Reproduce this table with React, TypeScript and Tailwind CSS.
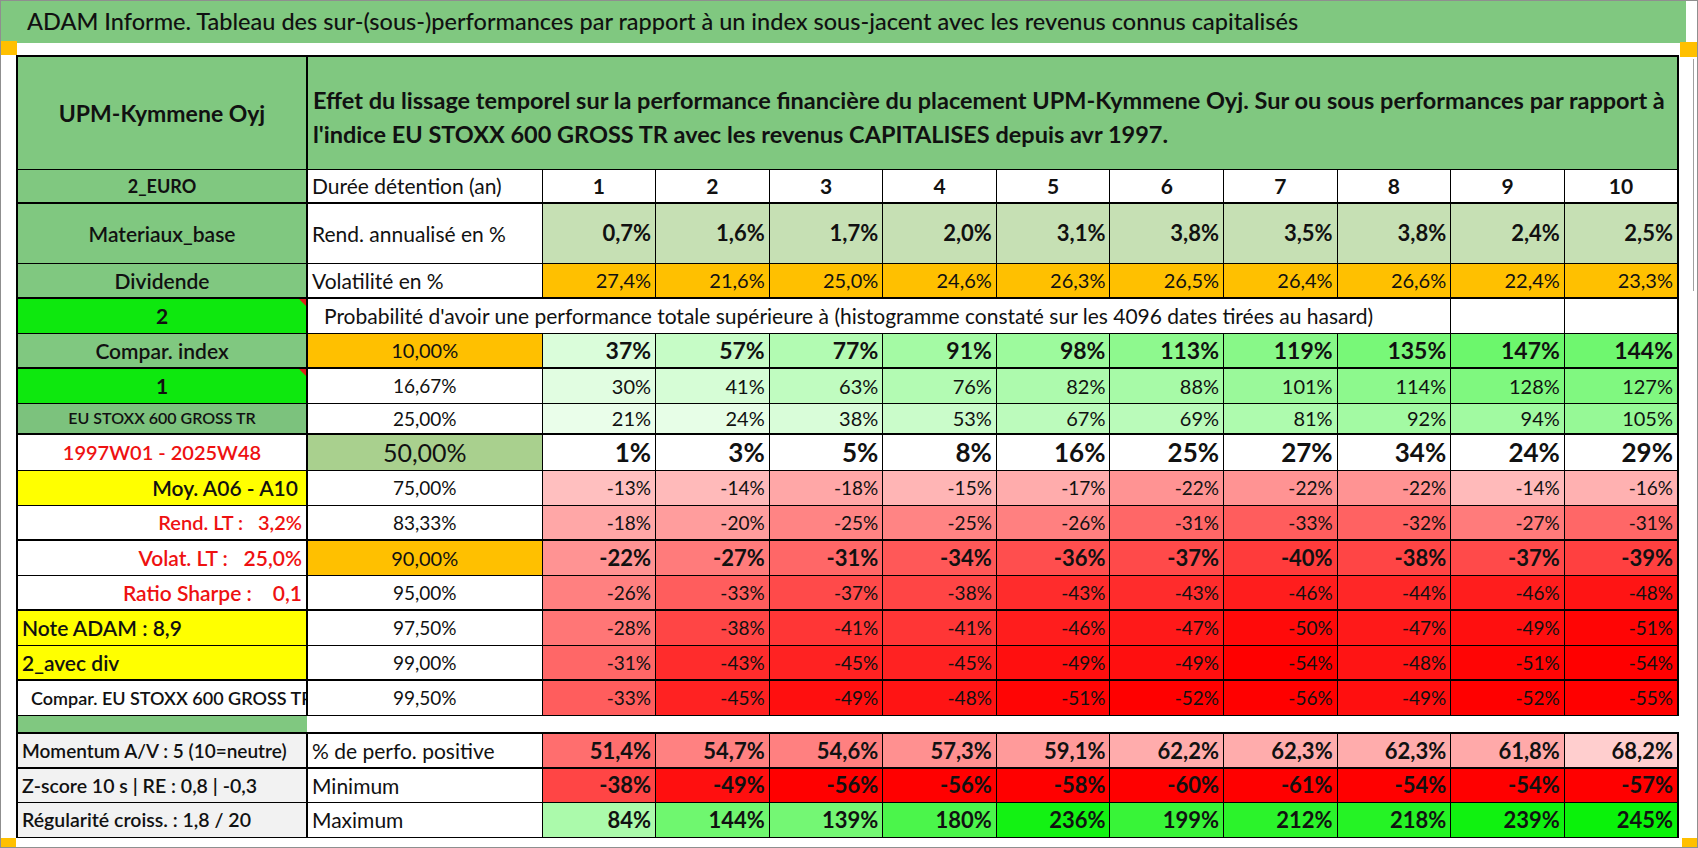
import React from "react";

const years = [1, 2, 3, 4, 5, 6, 7, 8, 9, 10];
const rend = ["0,7%", "1,6%", "1,7%", "2,0%", "3,1%", "3,8%", "3,5%", "3,8%", "2,4%", "2,5%"];
const vol = ["27,4%", "21,6%", "25,0%", "24,6%", "26,3%", "26,5%", "26,4%", "26,6%", "22,4%", "23,3%"];
const positive = [51.4, 54.7, 54.6, 57.3, 59.1, 62.2, 62.3, 62.3, 61.8, 68.2];
const minimum = [-38, -49, -56, -56, -58, -60, -61, -54, -54, -57];
const maximum = [84, 144, 139, 180, 236, 199, 212, 218, 239, 245];

type ProbRow = {
  label: React.ReactNode;
  labelCls: string;
  pct: string;
  pctCls: string;
  values: number[];
  valCls: string;
  plain?: boolean;
  bottom: string;
  h: string;
};

// teinte : blanc -> vert (positif), blanc -> rouge (negatif)
function cellColor(v: number) {
  if (v >= 0) {
    const t = Math.min(v / 255, 1);
    const c = Math.round(255 * (1 - t));
    return `rgb(${c},${Math.round(255 - 14 * t)},${c})`;
  }
  const t = Math.min(Math.abs(v) / 52, 1);
  const c = Math.round(255 * (1 - t));
  return `rgb(255,${c},${c})`;
}

function positiveColor(v: number) {
  const g = Math.min(255, Math.round(110 + (v - 51.4) * 5.7));
  return `rgb(255,${g},${g})`;
}

const fmt = (v: number) => `${v}%`;

function Corner() {
  return (
    <span className="absolute right-0 top-0 h-0 w-0 border-l-[7px] border-t-[7px] border-l-transparent border-t-[#e0201a]" />
  );
}

const probRows: ProbRow[] = [
  {
    label: "Compar. index",
    labelCls: "bg-[#80c880] text-center text-[21px] font-semibold",
    pct: "10,00%",
    pctCls: "bg-[#ffc000] text-[20px]",
    values: [37, 57, 77, 91, 98, 113, 119, 135, 147, 144],
    valCls: "text-[23px] font-bold",
    bottom: "border-b-2",
    h: "h-[35px]",
  },
  {
    label: (
      <>
        1
        <Corner />
      </>
    ),
    labelCls: "relative bg-[#0ee80e] text-center text-[21px] font-bold",
    pct: "16,67%",
    pctCls: "text-[19px]",
    values: [30, 41, 63, 76, 82, 88, 101, 114, 128, 127],
    valCls: "text-[20px]",
    bottom: "border-b",
    h: "h-[35px]",
  },
  {
    label: "EU STOXX 600 GROSS TR",
    labelCls: "bg-[#7cc27d] text-center text-[16px] font-semibold",
    pct: "25,00%",
    pctCls: "text-[19px]",
    values: [21, 24, 38, 53, 67, 69, 81, 92, 94, 105],
    valCls: "text-[20px]",
    bottom: "border-b-2",
    h: "h-[31px]",
  },
  {
    label: "1997W01 - 2025W48",
    labelCls: "text-center text-[20px] font-semibold text-[#ee1111]",
    pct: "50,00%",
    pctCls: "bg-[#a9d08e] text-[25px]",
    values: [1, 3, 5, 8, 16, 25, 27, 34, 24, 29],
    valCls: "text-[26px] font-bold",
    plain: true,
    bottom: "border-b",
    h: "h-[36px]",
  },
  {
    label: "Moy. A06 - A10",
    labelCls: "bg-[#ffff00] pr-[8px] text-right text-[21px] font-semibold",
    pct: "75,00%",
    pctCls: "text-[19px]",
    values: [-13, -14, -18, -15, -17, -22, -22, -22, -14, -16],
    valCls: "text-[19px]",
    bottom: "border-b",
    h: "h-[35px]",
  },
  {
    label: "Rend. LT :   3,2%",
    labelCls: "pr-[4px] text-right text-[20px] font-semibold text-[#ee1111]",
    pct: "83,33%",
    pctCls: "text-[19px]",
    values: [-18, -20, -25, -25, -26, -31, -33, -32, -27, -31],
    valCls: "text-[19px]",
    bottom: "border-b-2",
    h: "h-[35px]",
  },
  {
    label: "Volat. LT :   25,0%",
    labelCls: "pr-[4px] text-right text-[21px] font-semibold text-[#ee1111]",
    pct: "90,00%",
    pctCls: "bg-[#ffc000] text-[20px]",
    values: [-22, -27, -31, -34, -36, -37, -40, -38, -37, -39],
    valCls: "text-[22px] font-bold",
    bottom: "border-b",
    h: "h-[35px]",
  },
  {
    label: "Ratio Sharpe :    0,1",
    labelCls: "pr-[4px] text-right text-[21px] font-semibold text-[#ee1111]",
    pct: "95,00%",
    pctCls: "text-[19px]",
    values: [-26, -33, -37, -38, -43, -43, -46, -44, -46, -48],
    valCls: "text-[19px]",
    bottom: "border-b-2",
    h: "h-[35px]",
  },
  {
    label: "Note ADAM : 8,9",
    labelCls: "bg-[#ffff00] pl-[4px] text-left text-[21px] font-semibold",
    pct: "97,50%",
    pctCls: "text-[19px]",
    values: [-28, -38, -41, -41, -46, -47, -50, -47, -49, -51],
    valCls: "text-[19px]",
    bottom: "border-b",
    h: "h-[35px]",
  },
  {
    label: "2_avec div",
    labelCls: "bg-[#ffff00] pl-[4px] text-left text-[21px] font-semibold",
    pct: "99,00%",
    pctCls: "text-[19px]",
    values: [-31, -43, -45, -45, -49, -49, -54, -48, -51, -54],
    valCls: "text-[19px]",
    bottom: "border-b-2",
    h: "h-[35px]",
  },
  {
    label: "Compar. EU STOXX 600 GROSS TR",
    labelCls: "pl-[13px] pr-0 text-left text-[18px] font-semibold",
    pct: "99,50%",
    pctCls: "text-[19px]",
    values: [-33, -45, -49, -48, -51, -52, -56, -49, -52, -55],
    valCls: "text-[19px]",
    bottom: "border-b",
    h: "h-[35px]",
  },
];

export default function App() {
  const td = "border border-black px-[4px] leading-none whitespace-nowrap overflow-hidden";
  const num = `${td} text-right`;

  return (
    <div className="relative h-[848px] w-[1698px] overflow-hidden border border-[#8f8f8f] bg-white font-['Lato','Open_Sans',sans-serif] text-[#111]">
      {/* bandeau titre */}
      <div className="mr-[11px] flex h-[42px] items-center bg-[#80c880] pl-[26px] text-[23.5px] font-medium whitespace-nowrap">
        ADAM Informe. Tableau des sur-(sous-)performances par rapport à un index sous-jacent avec les revenus connus capitalisés
      </div>

      <div className="pl-[15px] pt-[12px]">
        <table className="w-[1663px] table-fixed border-collapse">
          <colgroup>
            <col className="w-[290px]" />
            <col className="w-[235px]" />
            {years.map((y) => (
              <col key={y} />
            ))}
          </colgroup>
          <tbody>
            <tr className="h-[113px]">
              <td className="border-2 border-b border-black bg-[#80c880] text-center text-[23px] font-bold whitespace-nowrap">UPM-Kymmene Oyj</td>
              <td colSpan={11} className="border-2 border-b border-black bg-[#80c880] pl-[5px] pt-[9px] text-[23.5px] font-bold whitespace-nowrap">
                <div className="leading-[34px]">
                  Effet du lissage temporel sur la performance financière du placement UPM-Kymmene Oyj. Sur ou sous performances par rapport à
                </div>
                <div className="leading-[34px]">l'indice EU STOXX 600 GROSS TR avec les revenus CAPITALISES depuis avr 1997.</div>
              </td>
            </tr>

            <tr className="h-[34px]">
              <td className={`${td} border-b-2 border-l-2 bg-[#80c880] text-center text-[18px] font-bold`}>2_EURO</td>
              <td className={`${td} border-b-2 border-l-2 text-[21px]`}>Durée détention (an)</td>
              {years.map((y) => (
                <td key={y} className={`${td} border-b-2 text-center text-[21px] font-bold ${y === 10 ? "border-r-2" : ""}`}>
                  {y}
                </td>
              ))}
            </tr>

            <tr className="h-[60px]">
              <td className={`${td} border-l-2 bg-[#80c880] text-center text-[21px] font-semibold`}>Materiaux_base</td>
              <td className={`${td} border-l-2 text-[21px]`}>Rend. annualisé en %</td>
              {rend.map((r, i) => (
                <td key={i} className={`${num} bg-[#c6e0b4] text-[22px] font-bold ${i === 9 ? "border-r-2" : ""}`}>
                  {r}
                </td>
              ))}
            </tr>

            <tr className="h-[35px]">
              <td className={`${td} border-b-2 border-l-2 bg-[#80c880] text-center text-[21px] font-semibold`}>Dividende</td>
              <td className={`${td} border-b-2 border-l-2 text-[21px]`}>Volatilité en %</td>
              {vol.map((r, i) => (
                <td key={i} className={`${num} border-b-2 bg-[#ffc000] text-[20px] ${i === 9 ? "border-r-2" : ""}`}>
                  {r}
                </td>
              ))}
            </tr>

            <tr className="h-[35px]">
              <td className={`${td} relative border-l-2 bg-[#0ee80e] text-center text-[21px] font-bold`}>
                2
                <Corner />
              </td>
              <td colSpan={9} className={`${td} border-l-2 pl-[16px] text-[21px]`}>
                Probabilité d'avoir une performance totale supérieure à (histogramme constaté sur les 4096 dates tirées au hasard)
              </td>
              <td className={td} />
              <td className={`${td} border-r-2`} />
            </tr>

            {probRows.map((row, r) => (
              <tr key={r} className={row.h}>
                <td className={`${td} ${row.bottom} border-l-2 whitespace-pre ${row.labelCls}`}>{row.label}</td>
                <td className={`${td} ${row.bottom} border-l-2 text-center ${row.pctCls}`}>{row.pct}</td>
                {row.values.map((v, i) => (
                  <td
                    key={i}
                    className={`${num} ${row.bottom} ${row.valCls} ${i === 9 ? "border-r-2" : ""}`}
                    style={{ backgroundColor: row.plain ? "#ffffff" : cellColor(v) }}
                  >
                    {fmt(v)}
                  </td>
                ))}
              </tr>
            ))}

            <tr className="h-[18px]">
              <td className="border-0 border-l-2 border-black bg-[#80c880]" />
              <td colSpan={11} className="border-0" />
            </tr>

            <tr className="h-[35px]">
              <td className={`${td} border-b-2 border-l-2 border-t-2 bg-[#f2f2f2] text-[19px] font-semibold`}>Momentum A/V : 5 (10=neutre)</td>
              <td className={`${td} border-b-2 border-l-2 border-t-2 text-[21px]`}>% de perfo. positive</td>
              {positive.map((v, i) => (
                <td
                  key={i}
                  className={`${num} border-b-2 border-t-2 text-[22px] font-bold ${i === 9 ? "border-r-2" : ""}`}
                  style={{ backgroundColor: positiveColor(v) }}
                >
                  {v.toFixed(1).replace(".", ",")}%
                </td>
              ))}
            </tr>

            <tr className="h-[34px]">
              <td className={`${td} border-l-2 bg-[#f2f2f2] text-[19.5px] font-semibold`}>Z-score 10 s | RE : 0,8 | -0,3</td>
              <td className={`${td} border-l-2 text-[21px]`}>Minimum</td>
              {minimum.map((v, i) => (
                <td key={i} className={`${num} text-[22px] font-bold ${i === 9 ? "border-r-2" : ""}`} style={{ backgroundColor: cellColor(v) }}>
                  {fmt(v)}
                </td>
              ))}
            </tr>

            <tr className="h-[35px]">
              <td className={`${td} border-l-2 bg-[#f2f2f2] text-[19.5px] font-semibold`}>Régularité croiss. : 1,8 / 20</td>
              <td className={`${td} border-l-2 text-[21px]`}>Maximum</td>
              {maximum.map((v, i) => (
                <td key={i} className={`${num} text-[22px] font-bold ${i === 9 ? "border-r-2" : ""}`} style={{ backgroundColor: cellColor(v) }}>
                  {fmt(v)}
                </td>
              ))}
            </tr>
          </tbody>
        </table>
      </div>

      {/* poignées de sélection */}
      <div className="absolute left-0 top-[40px] h-[14px] w-[16px] bg-[#ffc000]" />
      <div className="absolute right-0 top-[41px] h-[15px] w-[17px] bg-[#ffc000]" />
      <div className="absolute bottom-0 left-0 h-[9px] w-[15px] bg-[#ffc000]" />
      <div className="absolute bottom-0 right-0 h-[9px] w-[15px] bg-[#ffc000]" />
      <div className="absolute right-[3px] top-[58px] h-[232px] w-px bg-[#a0a0a0]" />
    </div>
  );
}
